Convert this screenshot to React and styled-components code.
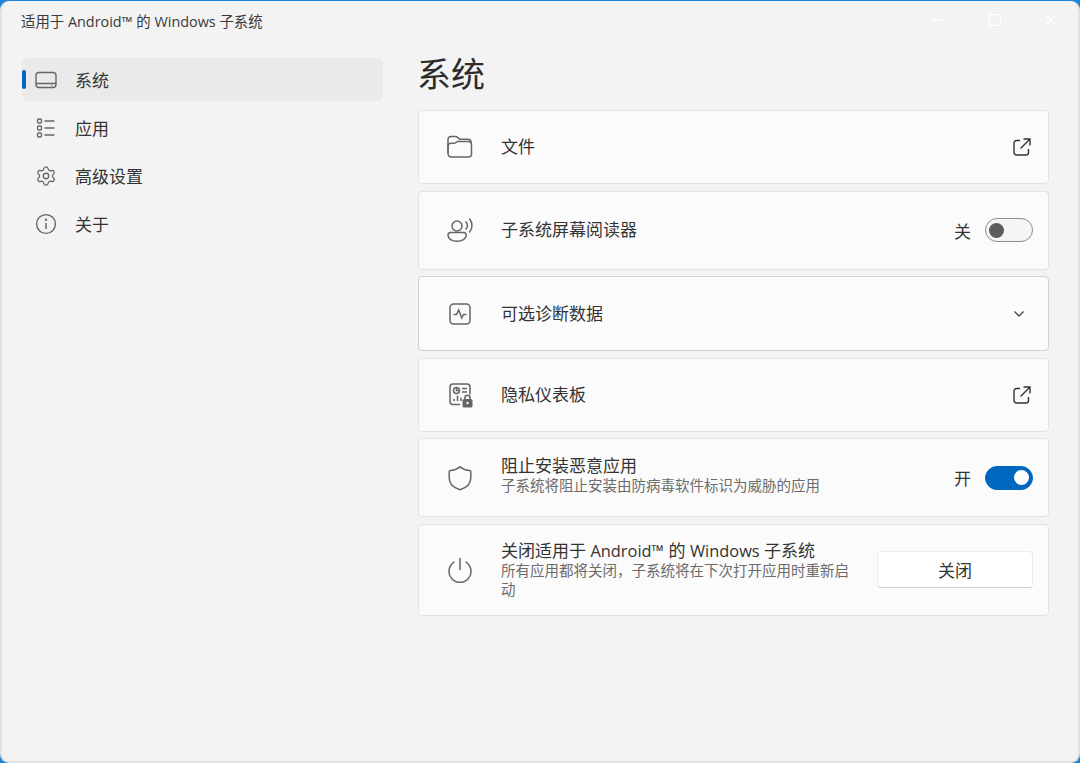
import styled, { createGlobalStyle } from 'styled-components';
import { Settings } from 'lucide-react';

const GlobalStyle = createGlobalStyle`
  html, body {
    margin: 0;
    padding: 0;
    background: #1f86d8;
  }
  * {
    box-sizing: border-box;
  }
`;

function TabletIcon() {
  return (
    <NavSvg viewBox="0 0 22 22">
      <rect x="1" y="3.5" width="20" height="15" rx="3" />
      <path d="M1 14.5h20M16.5 16.5h.8" />
    </NavSvg>
  );
}

function ListIcon() {
  return (
    <NavSvg viewBox="0 0 22 22">
      <rect x="2.5" y="2" width="4" height="4" rx="1.2" />
      <rect x="2.5" y="9" width="4" height="4" rx="1.2" />
      <rect x="2.5" y="16" width="4" height="4" rx="1.2" />
      <path d="M9.5 4h10M9.5 11h10M9.5 18h10" />
    </NavSvg>
  );
}

function InfoIcon() {
  return (
    <NavSvg viewBox="0 0 22 22">
      <circle cx="11" cy="11" r="9.4" />
      <path d="M11 10v6" strokeWidth="1.5" />
      <circle cx="11" cy="6.8" r=".5" />
    </NavSvg>
  );
}

function FolderIcon() {
  return (
    <CardSvg viewBox="0 0 26 26">
      <path d="M1 19V5.500a3 3 0 0 1 3-3h4.700c.8 0 1.300.3 1.900.9l2 1.900h8.400a3 3 0 0 1 3 3v1.200" />
      <path d="M1 19c0 2.500 1.500 4 3.500 4h17a3 3 0 0 0 3-3v-9.500a3 3 0 0 0-3-3H11c-.9 0-1.400.5-2.100 1-.6.5-1.100.8-2 .8H4a3 3 0 0 0-3 3z" />
    </CardSvg>
  );
}

function VoiceIcon() {
  return (
    <CardSvg viewBox="0 0 26 26">
      <circle cx="10" cy="9" r="5" />
      <path d="M3.500 15.500h13a2.600 2.600 0 0 1 2.800 2.500c0 3.800-4.200 6.200-9.300 6.200S1 21.800 1 18a2.600 2.600 0 0 1 2.500-2.500z" />
      <path d="M18.500 4.500c1.300 1.200 2 2.600 2 4s-.7 2.800-2 4M22.300 1.500c1.800 2.100 2.700 4.500 2.700 7s-.9 4.900-2.700 7" />
    </CardSvg>
  );
}

function PulseIcon() {
  return (
    <CardSvg viewBox="0 0 26 26">
      <rect x="3" y="3" width="20" height="20" rx="3.5" />
      <path d="M6.500 13.500h3l2.200-4.500 3 8 1.800-3.500h3" />
    </CardSvg>
  );
}

function DashboardIcon() {
  return (
    <CardSvg viewBox="0 0 26 26">
      <path d="M13 22.500H6a3 3 0 0 1-3-3V5a3 3 0 0 1 3-3h14a3 3 0 0 1 3 3v7.500" />
      <circle cx="9.5" cy="8.5" r="3" />
      <path d="M9.500 5.500v3h3M15 6.500h5M15 10h5M7 19v-2M10.500 19v-5.500M14 19v-3.500" />
      <rect x="15.5" y="17" width="10" height="8.5" rx="1.5" fill="#666" stroke="none" />
      <path d="M18 17.500v-1.800a2.500 2.500 0 0 1 5 0v1.800" strokeWidth="1.6" />
      <circle cx="20.5" cy="21" r="1.2" fill="#fbfbfb" stroke="none" />
    </CardSvg>
  );
}

function ShieldIcon() {
  return (
    <CardSvg viewBox="0 0 26 26">
      <path d="M13 1.800c2.800 2.300 5.800 3.500 9.800 3.700.6 0 1 .4 1 1v6.500c0 5.500-3.700 9.500-10.800 11.800C5.900 22.500 2.200 18.500 2.200 13V6.500c0-.6.400-1 1-1 4-.2 7-1.400 9.800-3.700z" />
    </CardSvg>
  );
}

function PowerIcon() {
  return (
    <CardSvg viewBox="0 0 26 26">
      <path d="M13 1v12" />
      <path d="M7.500 4.800a11 11 0 1 0 11 0" />
    </CardSvg>
  );
}

function ExternalIcon() {
  return (
    <ExternalSvg viewBox="0 0 18 18">
      <path d="M7 2.500H3.500a2.500 2.500 0 0 0-2.500 2.500v9.500A2.500 2.500 0 0 0 3.500 17H13a2.500 2.500 0 0 0 2.500-2.500V11" />
      <path d="M7.500 10.500L17 1M10.500 1H17v6.500" />
    </ExternalSvg>
  );
}

function Chevron() {
  return (
    <ChevronSvg viewBox="0 0 12 8">
      <path d="M1.500 1.500L6 6l4.500-4.500" />
    </ChevronSvg>
  );
}

function Toggle({ on, label }) {
  return (
    <ToggleWrap>
      <span>{label}</span>
      <Track $on={on}>
        <Thumb $on={on} />
      </Track>
    </ToggleWrap>
  );
}

export default function App() {
  const navItems = [
    { label: '系统', icon: <TabletIcon />, active: true },
    { label: '应用', icon: <ListIcon /> },
    { label: '高级设置', icon: <GearIcon size={22} strokeWidth={1.4} /> },
    { label: '关于', icon: <InfoIcon /> },
  ];

  return (
    <>
      <GlobalStyle />
      <Window>
        <TitleBar>
          <AppTitle>适用于 Android™ 的 Windows 子系统</AppTitle>
          <WindowButtons>
            <WindowSvg viewBox="0 0 12 12">
              <path d="M0 6h12" />
            </WindowSvg>
            <WindowSvg viewBox="0 0 12 12">
              <rect x=".5" y=".5" width="11" height="11" rx="2" />
            </WindowSvg>
            <WindowSvg viewBox="0 0 12 12">
              <path d="M.5.5l11 11M11.500.5l-11 11" />
            </WindowSvg>
          </WindowButtons>
        </TitleBar>
        <Body>
          <Sidebar>
            {navItems.map((item) => (
              <NavItem key={item.label} $active={item.active}>
                <NavIcon>{item.icon}</NavIcon>
                {item.label}
              </NavItem>
            ))}
          </Sidebar>
          <Main>
            <Heading>系统</Heading>
            <CardList>
              <Card $height={74}>
                <CardIcon>
                  <FolderIcon />
                </CardIcon>
                <CardText>
                  <CardTitle>文件</CardTitle>
                </CardText>
                <ExternalIcon />
              </Card>
              <Card $height={79}>
                <CardIcon>
                  <VoiceIcon />
                </CardIcon>
                <CardText>
                  <CardTitle>子系统屏幕阅读器</CardTitle>
                </CardText>
                <Toggle label="关" />
              </Card>
              <Card $height={75} $strong>
                <CardIcon>
                  <PulseIcon />
                </CardIcon>
                <CardText>
                  <CardTitle>可选诊断数据</CardTitle>
                </CardText>
                <Chevron />
              </Card>
              <Card $height={74}>
                <CardIcon>
                  <DashboardIcon />
                </CardIcon>
                <CardText>
                  <CardTitle>隐私仪表板</CardTitle>
                </CardText>
                <ExternalIcon />
              </Card>
              <Card $height={79}>
                <CardIcon>
                  <ShieldIcon />
                </CardIcon>
                <CardText $raised>
                  <CardTitle>阻止安装恶意应用</CardTitle>
                  <CardSub>子系统将阻止安装由防病毒软件标识为威胁的应用</CardSub>
                </CardText>
                <Toggle on label="开" />
              </Card>
              <Card $height={92}>
                <CardIcon>
                  <PowerIcon />
                </CardIcon>
                <CardText>
                  <CardTitle>
                    关闭适用于 <Latin>Android™</Latin> 的 <Latin>Windows</Latin> 子系统
                  </CardTitle>
                  <CardSub>所有应用都将关闭，子系统将在下次打开应用时重新启动</CardSub>
                </CardText>
                <CloseButton>关闭</CloseButton>
              </Card>
            </CardList>
          </Main>
        </Body>
      </Window>
    </>
  );
}

const Window = styled.div`
  width: 1080px;
  height: 762px;
  margin-top: 1px;
  display: flex;
  flex-direction: column;
  overflow: hidden;
  background: #f3f3f3;
  border: 2px solid #e2e2e2;
  border-top: 0;
  border-radius: 9px;
  color: #333333;
  font-family: 'Open Sans', 'Noto Sans CJK SC', sans-serif;
`;

const TitleBar = styled.div`
  height: 41px;
  flex: none;
  display: flex;
  align-items: center;
  justify-content: space-between;
  padding: 0 21px 2px 19px;
`;

const AppTitle = styled.div`
  font-size: 14.4px;
  color: #3a3a3a;
`;

const WindowButtons = styled.div`
  display: flex;
  align-items: center;
  gap: 44px;
  margin-top: -2px;
`;

const WindowSvg = styled.svg`
  width: 12px;
  height: 12px;
  fill: none;
  stroke: #ffffff;
  stroke-width: 1.3;
`;

const Body = styled.div`
  flex: 1;
  display: grid;
  grid-template-columns: 361px 1fr;
  column-gap: 35px;
  padding: 0 29px 0 20px;
`;

const Sidebar = styled.nav`
  display: flex;
  flex-direction: column;
  gap: 5px;
  padding-top: 16px;
`;

const NavItem = styled.div`
  position: relative;
  height: 43px;
  display: flex;
  align-items: center;
  gap: 18px;
  padding-left: 13px;
  font-size: 17px;
  border-radius: 6px;
  background: ${(props) => (props.$active ? '#eaeaea' : 'transparent')};

  &::before {
    content: '';
    display: ${(props) => (props.$active ? 'block' : 'none')};
    position: absolute;
    left: 0;
    top: 12px;
    width: 4px;
    height: 19px;
    border-radius: 2px;
    background: #0067c0;
  }
`;

const NavIcon = styled.span`
  width: 22px;
  height: 22px;
  display: flex;
  color: #666666;
`;

const NavSvg = styled.svg`
  width: 22px;
  height: 22px;
  fill: none;
  stroke: #666666;
  stroke-width: 1.4;
`;

const GearIcon = styled(Settings)`
  color: #666666;
`;

const Main = styled.main`
  display: flex;
  flex-direction: column;
`;

const Heading = styled.h1`
  margin: 0 0 0 -1px;
  height: 68px;
  font-size: 34px;
  font-weight: 400;
  line-height: 64px;
  color: #2b2b2b;
`;

const CardList = styled.div`
  display: flex;
  flex-direction: column;
  gap: 6.5px;
`;

const Card = styled.section`
  height: ${(props) => props.$height}px;
  display: flex;
  align-items: center;
  padding: 0 15px 0 28px;
  background: #fbfbfb;
  border: 1.5px solid ${(props) => (props.$strong ? '#d2d2d2' : '#e2e2e2')};
  border-radius: 4px;
`;

const CardIcon = styled.div`
  width: 26px;
  height: 26px;
  flex: none;
  margin-right: 28px;
`;

const CardSvg = styled.svg`
  width: 26px;
  height: 26px;
  display: block;
  fill: none;
  stroke: #666666;
  stroke-width: 1.5;
`;

const CardText = styled.div`
  flex: 1;
  min-width: 0;
  display: flex;
  flex-direction: column;
  margin-bottom: ${(props) => (props.$raised ? '5px' : '0')};
`;

const CardTitle = styled.div`
  font-size: 17px;
  line-height: 22px;
  color: #333333;
`;

const Latin = styled.span`
  font-size: 16.4px;
`;

const CardSub = styled.div`
  font-size: 14.5px;
  line-height: 18.5px;
  color: #6b6b6b;
`;

const ExternalSvg = styled.svg`
  width: 18px;
  height: 18px;
  margin-right: 2px;
  fill: none;
  stroke: #333333;
  stroke-width: 1.4;
`;

const ChevronSvg = styled.svg`
  width: 12px;
  height: 8px;
  margin-right: 8px;
  fill: none;
  stroke: #444444;
  stroke-width: 1.3;
`;

const ToggleWrap = styled.div`
  display: flex;
  align-items: center;
  gap: 14px;
  font-size: 17px;
  color: #333333;
`;

const Track = styled.div`
  width: 48px;
  height: 24px;
  display: flex;
  align-items: center;
  justify-content: ${(props) => (props.$on ? 'flex-end' : 'flex-start')};
  padding: 0 3px;
  border-radius: 12px;
  background: ${(props) => (props.$on ? '#0067c0' : '#f5f5f5')};
  border: 1px solid ${(props) => (props.$on ? '#0067c0' : '#8e8e8e')};
`;

const Thumb = styled.div`
  width: 15px;
  height: 15px;
  border-radius: 50%;
  background: ${(props) => (props.$on ? '#ffffff' : '#5c5c5c')};
`;

const CloseButton = styled.button`
  width: 156px;
  height: 37px;
  flex: none;
  margin-left: 26px;
  background: #ffffff;
  border: 1px solid #ebebeb;
  border-bottom-color: #cfcfcf;
  border-radius: 4px;
  font-family: inherit;
  font-size: 17px;
  color: #333333;
`;
